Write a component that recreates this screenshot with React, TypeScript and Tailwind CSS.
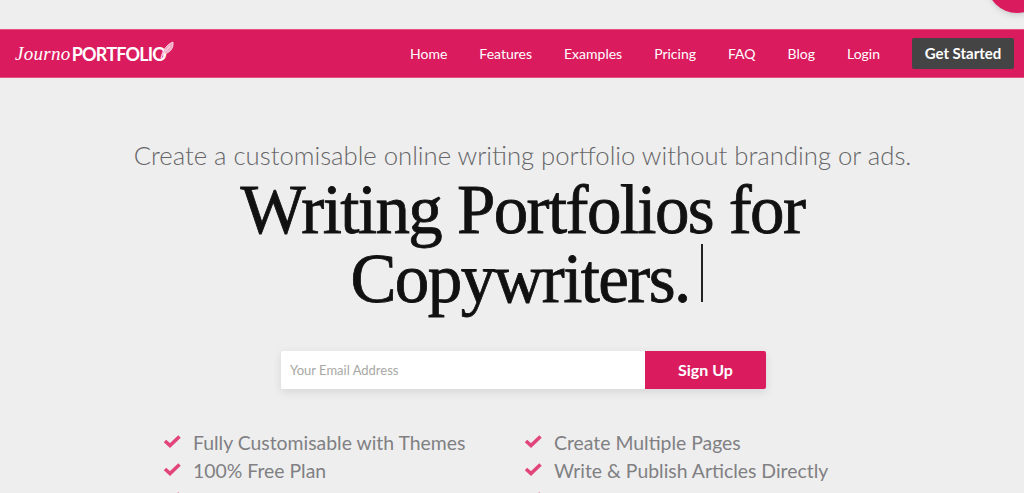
import React from "react";

const navLinks = ["Home", "Features", "Examples", "Pricing", "FAQ", "Blog", "Login"];

// third row only shows the top of its tick before the fold
const leftFeatures = ["Fully Customisable with Themes", "100% Free Plan", ""];
const rightFeatures = ["Create Multiple Pages", "Write & Publish Articles Directly", ""];

const Check = () => (
  <svg viewBox="0 0 18 14" className="h-[14px] w-[18px] shrink-0 -translate-y-[2px] text-[#e2457c]" fill="none">
    <path d="M2 7 L7 11.5 L16.5 2.5" stroke="currentColor" strokeWidth="3.6" />
  </svg>
);

const FeatureList = ({ items }: { items: string[] }) => (
  <ul className="flex flex-col gap-[3.5px]">
    {items.map((item, i) => (
      <li key={i} className="flex h-[25px] items-center gap-[12px] text-[19.4px] text-[#808083]">
        <Check />
        <span>{item}</span>
      </li>
    ))}
  </ul>
);

export default function App() {
  return (
    <div className="relative h-[493px] w-[1024px] overflow-hidden bg-[#eeeeee] font-['Lato','Open_Sans',sans-serif]">
      {/* chat bubble poking in from the top */}
      <div className="absolute right-[-23px] top-[-47px] h-[60px] w-[60px] rounded-full bg-[#da1c5f] shadow-md" />

      <div className="h-[29px]" />
      <nav className="flex h-[49px] items-center justify-between border-y border-[#e4537f] bg-[#da1c5f] pl-[15px] pr-[10px]">
        <div className="flex items-center text-white">
          <span className="font-['Liberation_Serif',serif] text-[19px] italic leading-none tracking-[0.3px]">Journo</span>
          <span className="ml-[1px] text-[18px] font-bold leading-none tracking-[-0.8px]">PORTFOLIO</span>
          <svg viewBox="0 0 14 18" className="ml-[-6px] mt-[-8px] h-[18px] w-[14px]" fill="#f3a9c4" stroke="#ffffff" strokeWidth="0.6">
            <path d="M1 17 C2 10 7 3 13 1 C14 7 10 12 4 13 L2 15 Z" />
            <path d="M3 13 L10 5" fill="none" />
          </svg>
        </div>
        <div className="flex items-center">
          <div className="flex items-center gap-[32px] text-[14px] text-white">
            {navLinks.map((link) => (
              <a key={link}>{link}</a>
            ))}
          </div>
          <a className="ml-[32px] flex h-[31px] w-[102px] items-center justify-center rounded-[2px] bg-[#444444] text-[15px] font-bold text-white">
            Get Started
          </a>
        </div>
      </nav>

      <section className="flex flex-col items-center">
        <div className="flex flex-col items-center pl-[21px]">
          <p className="mt-[61px] text-[25.7px] font-light leading-[32px] text-[#666668]">
            Create a customisable online writing portfolio without branding or ads.
          </p>
          <h1 className="mt-[5px] text-center font-['Liberation_Serif',serif] text-[69px] leading-[68px] tracking-[-1.6px] text-[#111111] [-webkit-text-stroke:0.8px_#111111]">
            Writing Portfolios for
            <br />
            <span className="pl-[8px]">
              Copywriters.
              <span className="ml-[11px] inline-block h-[58px] w-[2px] bg-[#222222] align-baseline" />
            </span>
          </h1>

          <form className="ml-[2px] mt-[38px] flex h-[38px] w-[485px] rounded-[2px] shadow-[0_3px_10px_rgba(0,0,0,0.1)]">
            <div className="flex flex-1 items-center rounded-l-[2px] bg-white pl-[9px] pt-[2px] text-[13px] text-[#a8a8a4]">
              Your Email Address
            </div>
            <button type="button" className="w-[121px] rounded-r-[2px] bg-[#da1c5f] text-[16px] font-bold text-white">
              Sign Up
            </button>
          </form>
        </div>

        <div className="mt-[41px] flex w-[700px] pl-[1px]">
          <div className="w-[361px]">
            <FeatureList items={leftFeatures} />
          </div>
          <FeatureList items={rightFeatures} />
        </div>
      </section>
    </div>
  );
}
